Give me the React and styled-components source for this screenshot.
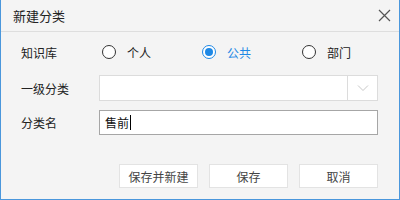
import styled, { createGlobalStyle } from "styled-components";

const GlobalStyle = createGlobalStyle`
  html, body {
    margin: 0;
    padding: 0;
    background: #f4f4f4;
  }
  * {
    box-sizing: border-box;
  }
`;

const Dialog = styled.div`
  width: 400px;
  height: 200px;
  background: #f4f4f4;
  border: 1px solid #4a97dc;
  border-top: none;
  font-family: "Noto Sans CJK SC", "Liberation Sans", sans-serif;
  font-size: 12px;
  color: #222;
  display: flex;
  flex-direction: column;
`;

const TitleBar = styled.div`
  height: 32px;
  display: flex;
  align-items: center;
  justify-content: space-between;
  padding: 0 6px 0 12px;
  border-bottom: 1px solid #dedede;
  font-size: 13px;
`;

const CloseBtn = styled.button`
  border: none;
  background: none;
  padding: 0;
  width: 18px;
  height: 18px;
  display: flex;
  align-items: center;
  justify-content: center;
  cursor: pointer;
`;

const Body = styled.div`
  flex: 1;
  padding: 6px 21px 0 20px;
  display: flex;
  flex-direction: column;
`;

const Row = styled.div`
  display: flex;
  align-items: center;
  height: ${(p) => p.h}px;
  margin-top: ${(p) => p.mt || 0}px;
`;

const Label = styled.div`
  width: 81px;
  flex-shrink: 0;
`;

const RadioGroup = styled.div`
  display: flex;
  align-items: center;
`;

const RadioItem = styled.label`
  display: flex;
  align-items: center;
  width: 100px;
  flex-shrink: 0;
  color: ${(p) => (p.checked ? "#1e88e5" : "#222")};
  cursor: pointer;
  &:last-child {
    width: auto;
  }
`;

const RadioCircle = styled.span`
  width: 14px;
  height: 14px;
  border-radius: 50%;
  border: 1px solid ${(p) => (p.checked ? "#1e88e5" : "#333")};
  margin-right: 11px;
  display: flex;
  align-items: center;
  justify-content: center;
  background: #fff;
  &::after {
    content: "";
    display: ${(p) => (p.checked ? "block" : "none")};
    width: 8px;
    height: 8px;
    border-radius: 50%;
    background: #1e88e5;
  }
`;

const SelectBox = styled.div`
  flex: 1;
  height: 26px;
  background: #fff;
  border: 1px solid #dcdcdc;
  display: flex;
  margin-left: -3px;
`;

const SelectArrow = styled.div`
  width: 30px;
  margin-left: auto;
  border-left: 1px solid #dcdcdc;
  display: flex;
  align-items: center;
  justify-content: center;
`;

const TextInput = styled.div`
  flex: 1;
  height: 25px;
  background: #fff;
  border: 1px solid #a6a6a6;
  display: flex;
  align-items: center;
  padding-left: 5px;
  color: #111;
  margin-left: -3px;
`;

const Caret = styled.span`
  display: inline-block;
  width: 1px;
  height: 15px;
  background: #000;
  margin-left: 1px;
`;

const Footer = styled.div`
  display: flex;
  justify-content: flex-end;
  gap: 11px;
  padding: 0 21px 11px 0;
  margin-top: auto;
`;

const Button = styled.button`
  width: 79px;
  height: 24px;
  background: #fff;
  border: 1px solid #e3e3e3;
  font-family: inherit;
  font-size: 12px;
  color: #444;
  padding: 0;
  cursor: pointer;
`;

const options = [
  { label: "个人", checked: false },
  { label: "公共", checked: true },
  { label: "部门", checked: false },
];

export default function App() {
  return (
    <>
      <GlobalStyle />
      <Dialog>
        <TitleBar>
          <span>新建分类</span>
          <CloseBtn>
            <svg width="13" height="13" viewBox="0 0 13 13">
              <path d="M1 1L12 12M12 1L1 12" stroke="#555" strokeWidth="1.2" fill="none" />
            </svg>
          </CloseBtn>
        </TitleBar>
        <Body>
          <Row h={28}>
            <Label>知识库</Label>
            <RadioGroup>
              {options.map((o) => (
                <RadioItem key={o.label} checked={o.checked}>
                  <RadioCircle checked={o.checked} />
                  {o.label}
                </RadioItem>
              ))}
            </RadioGroup>
          </Row>
          <Row h={26} mt={9}>
            <Label>一级分类</Label>
            <SelectBox>
              <SelectArrow>
                <svg width="12" height="8" viewBox="0 0 12 8">
                  <path d="M1 1.5L6 6.5L11 1.5" stroke="#c8c8c8" strokeWidth="1" fill="none" />
                </svg>
              </SelectArrow>
            </SelectBox>
          </Row>
          <Row h={25} mt={9}>
            <Label>分类名</Label>
            <TextInput>
              售前
              <Caret />
            </TextInput>
          </Row>
        </Body>
        <Footer>
          <Button>保存并新建</Button>
          <Button>保存</Button>
          <Button>取消</Button>
        </Footer>
      </Dialog>
    </>
  );
}
